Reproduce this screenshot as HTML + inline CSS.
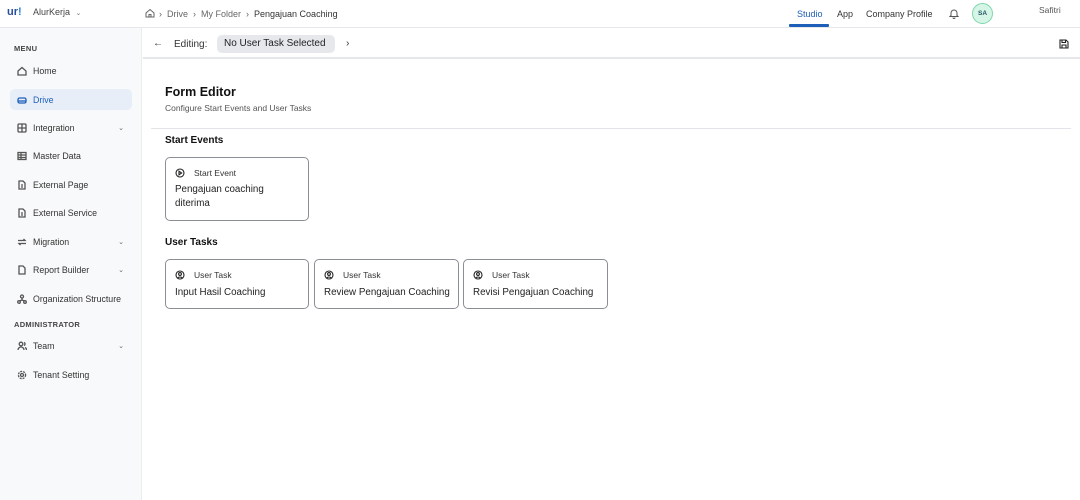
<!DOCTYPE html>
<html><head><meta charset="utf-8"><style>
*{box-sizing:border-box;margin:0;padding:0}
body{width:1080px;height:500px;overflow:hidden;font-family:"Liberation Sans",sans-serif;background:#fff;color:#222;position:relative}
.abs{position:absolute}
.top{left:0;top:0;width:1080px;height:28px;border-bottom:1px solid #e5e7eb;background:#fff}
.side{left:0;top:28px;width:142px;height:472px;background:#f8f9fa;border-right:1px solid #ececec}
.nav{position:absolute;left:10px;width:122px;height:21px;border-radius:5px;font-size:8.8px;color:#333;display:flex;align-items:center;padding-left:7px}
.nav svg{width:10px;height:10px;margin-right:6px;stroke:#555;fill:none;stroke-width:1.3}
.nav .chev{position:absolute;right:8px;font-size:7px;color:#666}
.sec{position:absolute;left:14px;font-size:7.5px;font-weight:bold;color:#444;letter-spacing:.3px}
.card{position:absolute;border:1px solid #8a8f96;border-radius:5px;background:#fff}
.card .lbl{position:absolute;left:9px;top:10px;font-size:8.5px;color:#333;display:flex;align-items:center}
.card .lbl svg{width:10px;height:10px;margin-right:9px}
.card .t{position:absolute;left:9px;font-size:9.8px;color:#222;line-height:14px}
</style></head><body>
<div class="abs top">
 <div class="abs" style="left:7px;top:6px;font-size:11px;font-weight:bold;color:#2a4d9b;">ur<span style="color:#2a7fd4">!</span></div>
 <div class="abs" style="left:33px;top:7px;font-size:9px;color:#444">AlurKerja <span style="font-size:7px;color:#777;margin-left:3px">⌄</span></div>
 <svg class="abs" style="left:145px;top:8px" width="10" height="10" viewBox="0 0 10 10" fill="none" stroke="#666" stroke-width="1"><path d="M1 5L5 1.5L9 5V9H1Z M4 9V6.5H6V9"/></svg>
 <div class="abs" style="left:159px;top:9px;font-size:9px;color:#666">›&nbsp; Drive &nbsp;›&nbsp; My Folder &nbsp;›&nbsp; <span style="color:#333">Pengajuan Coaching</span></div>
 <div class="abs" style="left:797px;top:9px;font-size:9px;color:#1d5fb8">Studio</div>
 <div class="abs" style="left:789px;top:24px;width:40px;height:3px;background:#1d5fb8;border-radius:1px"></div>
 <div class="abs" style="left:837px;top:9px;font-size:9px;color:#333">App</div>
 <div class="abs" style="left:866px;top:9px;font-size:9px;color:#333">Company Profile</div>
 <svg class="abs" style="left:949px;top:8px" width="10" height="11" viewBox="0 0 10 11" fill="none" stroke="#555" stroke-width="1"><path d="M2 7.5V5a3 3 0 0 1 6 0v2.5l1 1H1z M4 9.5a1 1 0 0 0 2 0"/></svg>
 <div class="abs" style="left:972px;top:3px;width:21px;height:21px;border-radius:50%;background:#d5f5e6;border:1px solid #7fd6ad;font-size:6.5px;font-weight:bold;color:#256;text-align:center;line-height:19px">SA</div>
 <div class="abs" style="left:1039px;top:5px;font-size:8.5px;color:#555">Safitri</div>
</div>
<div class="abs side">
 <div class="sec" style="top:16px">MENU</div>
 <div class="nav" style="top:32px"><svg viewBox="0 0 10 10"><path d="M1 5L5 1.5L9 5V9H1Z"/></svg>Home</div>
 <div class="nav" style="top:61px;background:#e8eef8;color:#1d5fb8"><svg viewBox="0 0 10 10" style="stroke:#1d5fb8"><rect x="1" y="3" width="8" height="5" rx="1.5"/><path d="M1 6H9"/></svg>Drive</div>
 <div class="nav" style="top:89px"><svg viewBox="0 0 10 10"><rect x="1" y="1" width="8" height="8" rx="1"/><path d="M1 5H9M5 1V9"/></svg>Integration<span class="chev">⌄</span></div>
 <div class="nav" style="top:117px"><svg viewBox="0 0 10 10"><rect x="1" y="1.5" width="8" height="7"/><path d="M1 4H9M1 6.5H9M4 1.5V8.5"/></svg>Master Data</div>
 <div class="nav" style="top:146px"><svg viewBox="0 0 10 10"><path d="M2 1H6L8 3V9H2Z M4 5H6M4 7H6"/></svg>External Page</div>
 <div class="nav" style="top:174px"><svg viewBox="0 0 10 10"><path d="M2 1H6L8 3V9H2Z M4 5H6M4 7H6"/></svg>External Service</div>
 <div class="nav" style="top:203px"><svg viewBox="0 0 10 10"><path d="M1 3.5H8L6.5 2M9 6.5H2L3.5 8"/></svg>Migration<span class="chev">⌄</span></div>
 <div class="nav" style="top:231px"><svg viewBox="0 0 10 10"><path d="M2 1H6L8 3V9H2Z"/></svg>Report Builder<span class="chev">⌄</span></div>
 <div class="nav" style="top:260px"><svg viewBox="0 0 10 10"><circle cx="5" cy="2.5" r="1.5"/><circle cx="2" cy="8" r="1.3"/><circle cx="8" cy="8" r="1.3"/><path d="M5 4V6M2.5 7L5 6L7.5 7"/></svg>Organization Structure</div>
 <div class="sec" style="top:292px">ADMINISTRATOR</div>
 <div class="nav" style="top:307px"><svg viewBox="0 0 10 10"><circle cx="4" cy="3" r="1.8"/><path d="M1 9a3 3 0 0 1 6 0M7 1.5a1.6 1.6 0 0 1 0 3M8 6.5a2.5 2.5 0 0 1 1.5 2.5"/></svg>Team<span class="chev">⌄</span></div>
 <div class="nav" style="top:336px"><svg viewBox="0 0 10 10"><circle cx="5" cy="5" r="1.5"/><circle cx="5" cy="5" r="3.6" stroke-dasharray="2 1"/></svg>Tenant Setting</div>
</div>
<div class="abs" style="left:143px;top:28px;width:937px;height:31px;border-bottom:2px solid #e5e7eb;background:#fff">
 <div class="abs" style="left:10px;top:10px;font-size:10px;color:#333">←</div>
 <div class="abs" style="left:31px;top:11px;font-size:10px;color:#333">Editing:</div>
 <div class="abs" style="left:74px;top:7px;width:118px;height:18px;background:#e6e8eb;border-radius:5px;font-size:10px;color:#222;line-height:18px;padding-left:7px">No User Task Selected</div>
 <div class="abs" style="left:203px;top:10px;font-size:10px;color:#333">›</div>
 <svg class="abs" style="left:916px;top:11px" width="10" height="10" viewBox="0 0 10 10" fill="none" stroke="#222" stroke-width="1.1"><path d="M1 1H7L9 3V9H1Z M3 1V3.5H6.5V1 M3 9V6H7V9"/></svg>
</div>
<div class="abs" style="left:165px;top:85px;font-size:12.5px;font-weight:bold;color:#111">Form Editor</div>
<div class="abs" style="left:165px;top:103px;font-size:8.5px;color:#555">Configure Start Events and User Tasks</div>
<div class="abs" style="left:151px;top:128px;width:920px;height:1px;background:#e2e4e7"></div>
<div class="abs" style="left:165px;top:135px;font-size:10px;font-weight:bold;color:#111">Start Events</div>
<div class="card" style="left:165px;top:157px;width:144px;height:64px">
 <div class="lbl"><svg viewBox="0 0 10 10" fill="none" stroke="#222" stroke-width="1.1"><circle cx="5" cy="5" r="4"/><path d="M4 3.2L6.6 5L4 6.8Z"/></svg>Start Event</div>
 <div class="t" style="top:25px">Pengajuan coaching<br>diterima</div>
</div>
<div class="abs" style="left:165px;top:237px;font-size:10px;font-weight:bold;color:#111">User Tasks</div>
<div class="card" style="left:165px;top:259px;width:144px;height:50px">
 <div class="lbl"><svg viewBox="0 0 10 10" fill="none" stroke="#222" stroke-width="1.1"><circle cx="5" cy="5" r="4"/><circle cx="5" cy="4" r="1.4"/><path d="M2.6 8a3 2.5 0 0 1 4.8 0"/></svg>User Task</div>
 <div class="t" style="top:26px">Input Hasil Coaching</div>
</div>
<div class="card" style="left:314px;top:259px;width:145px;height:50px">
 <div class="lbl"><svg viewBox="0 0 10 10" fill="none" stroke="#222" stroke-width="1.1"><circle cx="5" cy="5" r="4"/><circle cx="5" cy="4" r="1.4"/><path d="M2.6 8a3 2.5 0 0 1 4.8 0"/></svg>User Task</div>
 <div class="t" style="top:26px">Review Pengajuan Coaching</div>
</div>
<div class="card" style="left:463px;top:259px;width:145px;height:50px">
 <div class="lbl"><svg viewBox="0 0 10 10" fill="none" stroke="#222" stroke-width="1.1"><circle cx="5" cy="5" r="4"/><circle cx="5" cy="4" r="1.4"/><path d="M2.6 8a3 2.5 0 0 1 4.8 0"/></svg>User Task</div>
 <div class="t" style="top:26px">Revisi Pengajuan Coaching</div>
</div>
</body></html>
